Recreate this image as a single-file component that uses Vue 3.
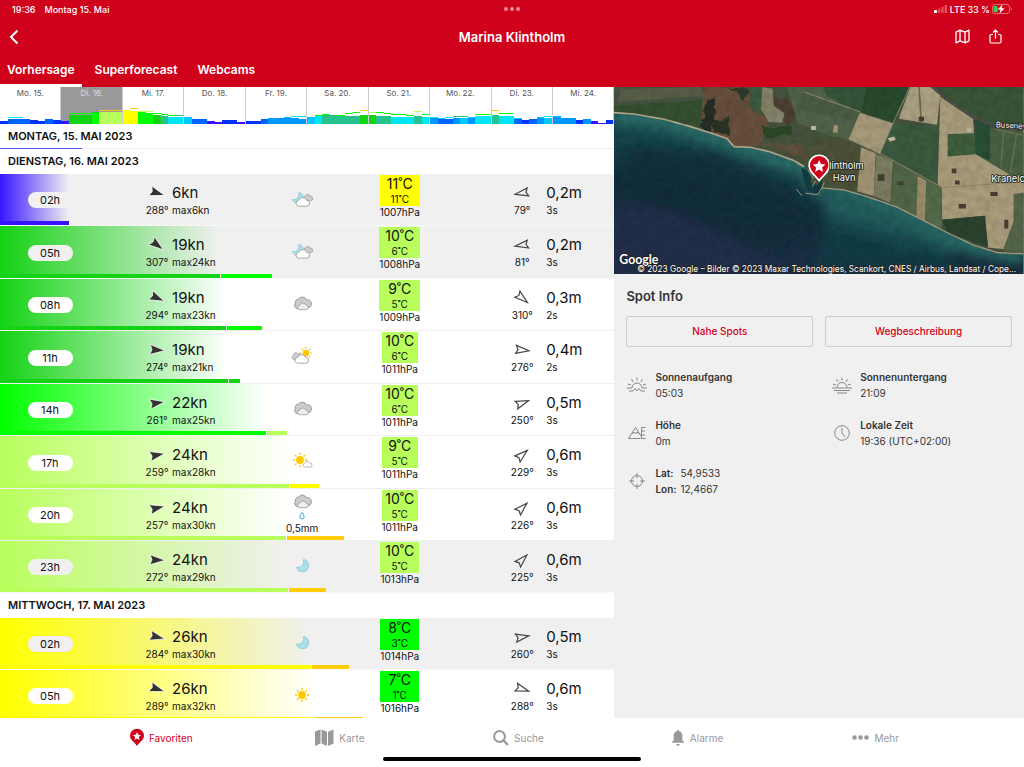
<script setup>
const PALETTE = {
  v: '#3714ff', b: '#0032ff', a: '#0064ff', s: '#0096ff', l: '#00c8ff', c: '#00e6f5',
  t: '#28c38c', g: '#14d214', e: '#00ff00', m: '#b8ff5c', y: '#ffff00', o: '#ffcc0a',
}

const week = [
  { label: 'Mo. 15.', bars: '3b 5a7c 5a7c 5a 4b 3b 5a 4b' },
  { label: 'Di. 16.', bars: '3v 9g11e 9g11e 9g11e 11e12g 12m14o 12m14o 12m14o', active: true },
  { label: 'Mi. 17.', bars: '13y14y 13y16o 12e13m 11e13m 9g11e 8t10e 7c9e 7c9t' },
  { label: 'Do. 18.', bars: '7l 5a 5a 3v 2v 4b 4b 2v' },
  { label: 'Fr. 19.', bars: '3b 3b 5a 6s 6s 6s7l 6s8c 5s8c' },
  { label: 'Sa. 20.', bars: '7l 8c9e 9t10e 9t 8t9e 8t11e 8t12e 9g14o' },
  { label: 'So. 21.', bars: '9g12m 8t12e 8t11e 7c10e 7c10e 7c9e 8t13m 7c10e' },
  { label: 'Mo. 22.', bars: '6s7c 5a6l 5a7c 6s8t 6l8t 6s7l 8c10e 8c10e' },
  { label: 'Di. 23.', bars: '9t14o 8c11e 8c11e 5a6l 4b 5a 6s7l 6l8c' },
  { label: 'Mi. 24.', bars: '7s8l 6s 6s 4b 5s 3v 1v 4b' },
].map((day) => ({
  ...day,
  bars: day.bars.split(' ').map((token) => {
    const [, height, color, gust, gustColor] = token.match(/^(\d+)([a-z])(?:(\d+)([a-z]))?$/)
    return { height: +height, color: PALETTE[color], gust: gust ? +gust : 0, gustColor: PALETTE[gustColor] }
  }),
}))

const slot = (time, night, dir, kn, max, base, gust, baseW, gustW, sky, temp, felt, tempColor, hpa, waveDir, wave, period, rain) => ({
  time, night, dir, kn, max, base: PALETTE[base], gust: PALETTE[gust],
  baseW: `${(baseW / 614) * 100}%`, gustW: `${(gustW / 614) * 100}%`,
  sky, temp, felt, tempColor: PALETTE[tempColor], hpa, waveDir, wave, period, rain,
})

const days = [
  { title: 'Montag, 15. Mai 2023', slots: [] },
  {
    title: 'Dienstag, 16. Mai 2023',
    slots: [
      slot('02h', true, 288, 6, 6, 'v', 'v', 69, 0, 'moon-clouds', 11, 11, 'y', 1007, 79, '0,2', 3),
      slot('05h', true, 307, 19, 24, 'g', 'e', 220, 51, 'moon-clouds', 10, 6, 'm', 1008, 81, '0,2', 3),
      slot('08h', false, 294, 19, 23, 'g', 'e', 226, 35, 'clouds', 9, 5, 'm', 1009, 310, '0,3', 2),
      slot('11h', false, 274, 19, 21, 'g', 'g', 228, 11, 'clouds-sun', 10, 6, 'm', 1011, 276, '0,4', 2),
      slot('14h', false, 261, 22, 25, 'e', 'm', 266, 20, 'clouds', 10, 6, 'm', 1011, 250, '0,5', 3),
      slot('17h', false, 259, 24, 28, 'm', 'y', 289, 29, 'sun-cloud', 9, 5, 'm', 1011, 229, '0,6', 3),
      slot('20h', false, 257, 24, 30, 'm', 'o', 286, 57, 'clouds', 10, 5, 'm', 1011, 226, '0,6', 3, '0,5mm'),
      slot('23h', true, 272, 24, 29, 'm', 'o', 288, 37, 'moon', 10, 5, 'm', 1013, 225, '0,6', 3),
    ],
  },
  {
    title: 'Mittwoch, 17. Mai 2023',
    slots: [
      slot('02h', true, 284, 26, 30, 'y', 'o', 311, 37, 'moon', 8, 3, 'e', 1014, 260, '0,5', 3),
      slot('05h', false, 289, 26, 32, 'y', 'o', 314, 48, 'sun', 7, 1, 'e', 1016, 288, '0,6', 3),
    ],
  },
]

const rayAngles = [0, 45, 90, 135, 180, 225, 270, 315]
const horizonRays = [-72, -36, 0, 36, 72]
const tabs = ['Vorhersage', 'Superforecast', 'Webcams']
const nav = ['Favoriten', 'Karte', 'Suche', 'Alarme', 'Mehr']
</script>

<template>
  <div class="app">
    <svg class="sprite" aria-hidden="true">
      <defs>
        <g id="w-cloud">
          <path d="M3.200 9.200a3 3 0 0 1-.3-6A4 4 0 0 1 10.400 3.200a3 3 0 0 1 .4 6z" />
        </g>
        <g id="w-moon">
          <path d="M7.500 0.500A6.200 6.200 0 1 1 0.500 8.300Q4.500 9 6.500 6.300Q8.200 3.800 7.500 0.500z" fill="#a9dfe8" stroke="#86c3cf" stroke-width=".7" />
        </g>
        <g id="w-sun">
          <circle r="3.900" fill="#ffc800" />
          <path v-for="r in rayAngles" :key="r" d="M0-5V-7" :transform="`rotate(${r})`" stroke="#ffc800" stroke-width="1.400" />
        </g>
      </defs>
    </svg>

    <header class="top">
      <div class="status">
        <div class="status-left"><span>19:36</span><span>Montag 15. Mai</span></div>
        <svg class="grip" width="16" height="4" viewBox="0 0 16 4"><circle cx="2" cy="2" r="2" /><circle cx="8" cy="2" r="2" /><circle cx="14" cy="2" r="2" /></svg>
        <div class="status-right">
          <svg width="14" height="8" viewBox="0 0 14 8" fill="#fff">
            <rect y="5" width="3" height="3" rx=".7" /><rect x="3.800" y="3.500" width="2.500" height="4.500" rx=".7" opacity=".3" /><rect x="7.200" y="1.800" width="2.500" height="6.200" rx=".7" opacity=".3" /><rect x="10.600" y="0" width="2.500" height="8" rx=".7" opacity=".3" />
          </svg>
          <span>LTE</span><span>33 %</span>
          <svg width="20" height="10" viewBox="0 0 20 10">
            <rect x=".5" y=".5" width="17" height="9" rx="2.500" fill="none" stroke="#fff" opacity=".4" />
            <path d="M2.500 2h3v6h-3a.8.8 0 0 1-.8-.8V2.800A.8.8 0 0 1 2.500 2z" fill="#34d74b" />
            <path d="M18.700 3.500a1.600 1.600 0 0 1 0 3z" fill="#fff" opacity=".5" />
            <path d="M10.500 0.500L5.500 5.600h3L7.600 9.500l5-5.200H9.500z" fill="#fff" />
          </svg>
        </div>
      </div>
      <div class="titlebar">
        <button class="icon-button" aria-label="Zurück"><svg width="10" height="16" viewBox="0 0 10 16"><path d="M8.500 1.500L2 8l6.500 6.500" stroke-width="2" /></svg></button>
        <h1>Marina Klintholm</h1>
        <div class="actions">
          <button class="icon-button" aria-label="Karte"><svg width="15" height="15" viewBox="0 0 15 15"><path d="M1 3.200L5 1.200L10 3.200L14 1.200V11.800L10 13.800L5 11.800L1 13.800zM5 1.200V11.800M10 3.200V13.800" stroke-width="1.300" stroke-linejoin="round" /></svg></button>
          <button class="icon-button" aria-label="Teilen"><svg width="13" height="15" viewBox="0 0 13 15"><path d="M4 5.500H2.200A1.200 1.200 0 0 0 1 6.700V12.800A1.200 1.200 0 0 0 2.200 14H10.800A1.200 1.200 0 0 0 12 12.800V6.700A1.200 1.200 0 0 0 10.800 5.500H9M6.500 9.500V1.200M4 3.500L6.500 1L9 3.500" stroke-width="1.200" /></svg></button>
        </div>
      </div>
      <nav class="tabs">
        <a v-for="(tab, i) in tabs" :key="tab" href="#" :class="{ current: i === 0 }">{{ tab }}</a>
      </nav>
    </header>

    <main>
      <section class="forecast">
        <div class="week">
          <button v-for="day in week" :key="day.label" class="week-day" :class="{ active: day.active }">
            <span>{{ day.label }}</span>
            <span class="bars">
              <i v-for="(bar, i) in day.bars" :key="i" class="bar">
                <i v-if="bar.gust" class="gust" :style="{ height: bar.gust - bar.height + 'px', borderColor: bar.gustColor }"></i>
                <i class="wind-bar" :style="{ height: bar.height + 'px', background: bar.color }"></i>
              </i>
            </span>
          </button>
        </div>
        <table>
          <tbody v-for="(day, d) in days" :key="day.title">
            <tr class="day" :class="{ passed: d === 0 }"><th colspan="5" scope="rowgroup">{{ day.title }}</th></tr>
            <tr v-for="s in day.slots" :key="s.time" class="slot" :class="{ night: s.night }">
              <th class="time" scope="row">
                <span class="fade" :style="{ width: s.baseW, '--tone': s.base }"></span>
                <span class="meter"><i :style="{ width: s.baseW, background: s.base }"></i><i :style="{ width: s.gustW, background: s.gust }"></i></span>
                <span class="pill">{{ s.time }}</span>
              </th>
              <td class="wind">
                <svg class="arrow" width="18" height="18" viewBox="-9 -9 18 18"><path :transform="`rotate(${s.dir - 270})`" d="M-7-5L8 0L-7 5L-5 0z" fill="#333" stroke="#fff" stroke-width=".7" /></svg>
                <span class="big">{{ s.kn }}kn</span>
                <span class="deg">{{ s.dir }}°</span>
                <span>max{{ s.max }}kn</span>
              </td>
              <td class="sky">
                <svg width="24" height="18" viewBox="0 0 24 18">
                  <template v-if="s.sky === 'moon-clouds'">
                    <g transform="translate(2 2) scale(.9)"><use href="#w-moon" /></g>
                    <g transform="translate(13 4) scale(.72)" fill="#ccc" stroke="#999"><use href="#w-cloud" /></g>
                    <g transform="translate(6 7)" fill="#fff" stroke="#aaa"><use href="#w-cloud" /></g>
                  </template>
                  <template v-else-if="s.sky === 'clouds'">
                    <path d="M7 13.500a3.200 3.200 0 0 1-1.500-5.200A3.300 3.300 0 0 1 8.500 4A4.600 4.600 0 0 1 16.500 5A3.700 3.700 0 0 1 18.500 12.500z" fill="#ccc" stroke="#999" />
                    <g transform="translate(7.500 7.500) scale(.8 .78)" fill="#eee" stroke="#999"><use href="#w-cloud" /></g>
                  </template>
                  <template v-else-if="s.sky === 'clouds-sun'">
                    <g transform="translate(16 6) scale(.85)"><use href="#w-sun" /></g>
                    <g transform="translate(2 5) rotate(-28 5 5) scale(.7)" fill="#ccc" stroke="#aaa"><use href="#w-cloud" /></g>
                    <g transform="translate(5 7)" fill="#fff" stroke="#aaa"><use href="#w-cloud" /></g>
                  </template>
                  <template v-else-if="s.sky === 'sun-cloud'">
                    <g transform="translate(10 8)"><use href="#w-sun" /></g>
                    <g transform="translate(13 9) scale(.66)" fill="#fff" stroke="#999"><use href="#w-cloud" /></g>
                  </template>
                  <g v-else-if="s.sky === 'moon'" transform="translate(6 2)"><use href="#w-moon" /></g>
                  <g v-else transform="translate(12 9)"><use href="#w-sun" /></g>
                </svg>
                <template v-if="s.rain">
                  <svg width="8" height="10" viewBox="0 0 8 10"><path d="M4 1.500C2.500 3.800 1.800 4.500 1.800 5.700a2.200 2.200 0 0 0 4.400 0C6.200 4.500 5.500 3.800 4 1.500z" fill="#fff" stroke="#38a8ee" /></svg>
                  <span>{{ s.rain }}</span>
                </template>
              </td>
              <td class="air">
                <div class="temp" :style="{ background: s.tempColor }"><span class="degrees">{{ s.temp }}˚C</span><span>{{ s.felt }}˚C</span></div>
                <span>{{ s.hpa }}hPa</span>
              </td>
              <td class="wave">
                <svg class="arrow" width="18" height="18" viewBox="-9 -9 18 18"><path :transform="`rotate(${s.waveDir - 270})`" d="M-6-4L7 0L-6 4L-4 0z" fill="none" stroke="#444" stroke-width="1.200" /></svg>
                <span class="big">{{ s.wave }}m</span>
                <span class="deg">{{ s.waveDir }}°</span>
                <span>{{ s.period }}s</span>
              </td>
            </tr>
          </tbody>
        </table>
      </section>

      <aside>
        <svg class="map" viewBox="0 3 1230 561" preserveAspectRatio="xMidYMid slice" role="img" aria-label="Satellitenkarte Klintholm Havn">
          <defs>
            <linearGradient id="sea" x1=".62" y1=".1" x2=".3" y2="1">
              <stop offset="0" stop-color="#2a6664" /><stop offset=".32" stop-color="#174a52" /><stop offset=".6" stop-color="#12303c" /><stop offset="1" stop-color="#1f2e48" />
            </linearGradient>
            <filter id="soft"><feGaussianBlur stdDeviation="16" /></filter>
            <filter id="rough"><feTurbulence type="fractalNoise" baseFrequency=".03" numOctaves="4" seed="4" result="n" /><feDisplacementMap in="SourceGraphic" in2="n" scale="24" xChannelSelector="R" yChannelSelector="G" /></filter>
            <filter id="grain" x="0" y="0" width="100%" height="100%"><feTurbulence type="fractalNoise" baseFrequency=".045" numOctaves="5" seed="9" /><feColorMatrix values="0 0 0 0 0  0 0 0 0 0  0 0 0 0 0  .9 .5 0 0 -.5" /></filter>
            <clipPath id="waterClip"><path d="M0 80L60 84L150 100L230 122L300 144L340 158L360 182L410 184L470 198L540 224L575 242L570 300L600 326L622 306L690 312L760 332L850 364L930 404L1000 440L1080 478L1150 500L1230 504V567H0z" /></clipPath>
          </defs>
          <rect y="3" width="1230" height="561" fill="#46533c" />
          <path d="M0 3H410L380 150L270 145L240 70L0 80z" fill="#465442" />
          <path d="M20 10L260 3L272 30L10 48z" fill="#6a6650" opacity=".55" />
          <path d="M0 60L265 43L262 125L150 100L0 78z" fill="#35502f" />
          <path d="M270 3H400L415 75L465 100L440 180L360 185L340 155L290 145L262 110z" fill="#67503c" />
          <g filter="url(#rough)">
            <path d="M280 38L305 34L300 110L280 150L262 120z" fill="#272e25" />
            <path d="M330 3L400 8L395 55L370 20z" fill="#2d3929" />
            <path d="M300 105L345 95L355 150L300 140z" fill="#2a3526" />
            <path d="M470 30L535 45L550 95L520 115L495 70z" fill="#4e4035" />
            <path d="M440 125L530 115L540 150L460 158z" fill="#2b4927" />
            <path d="M415 170L560 175L590 222L500 196z" fill="#5d513d" />
          </g>
          <path d="M418 3H446L440 75L405 60z" fill="#3a5b3e" />
          <path d="M446 3L476 8L480 60L512 82L505 110L465 108L441 70z" fill="#85836a" />
          <path d="M520 3H625L640 28L740 75L705 162L650 150L550 110z" fill="#52634b" />
          <path d="M568 18L740 78L728 104L550 70z" fill="#4b5c44" />
          <path d="M632 3H755L738 80L640 30z" fill="#34553a" />
          <path d="M758 3H888L835 110L742 78z" fill="#294a2e" />
          <path d="M738 80L838 112L798 204L705 160z" fill="#a99c7c" />
          <path d="M600 158L704 162L745 188L730 312L630 290L575 230z" fill="#4c5138" />
          <path d="M742 184L786 202L780 330L730 316z" fill="#a49475" />
          <path d="M788 204L838 225L830 352L780 330z" fill="#7d7d61" />
          <path d="M838 112L972 118L972 296L800 204z" fill="#3b5a3e" />
          <path d="M842 226L912 262L908 402L830 354z" fill="#526647" />
          <path d="M912 270L938 284L934 404L908 396z" fill="#9c8f6e" />
          <path d="M938 282L985 306L984 435L934 408z" fill="#546b4a" />
          <path d="M890 3H950L980 28L970 116L855 98z" fill="#aca082" />
          <path d="M916 3L923 112" stroke="#6b684f" stroke-width="5" />
          <path d="M980 32L1078 98L1085 204L1230 290V320L1210 390L1170 490L1122 485L1115 390L985 402L985 305L972 296z" fill="#aa9d7c" />
          <path d="M956 3H1230V130L1140 116L1030 60z" fill="#3a5538" />
          <path d="M1002 144L1082 142L1086 205L1002 212z" fill="#3f5f3d" />
          <path d="M1082 96L1230 140V292L1088 204z" fill="#486140" />
          <path d="M1082 96L1130 110L1128 224L1086 204z" fill="#2a4f36" />
          <path d="M1145 130L1230 148M1170 135L1162 245M1210 140L1190 260" stroke="#6c7454" stroke-width="4" />
          <path d="M985 402L1112 390L1124 484L1000 440z" fill="#2b432e" />
          <path d="M1200 325L1230 320V504L1168 494L1200 405z" fill="#55664a" />
          <path d="M956 3L1005 45L1080 95L1145 122L1230 130" fill="none" stroke="#4c4f4b" stroke-width="8" />
          <path d="M888 3L838 112L798 205M705 160L800 204L842 226L985 305L1200 290M740 78L570 18" fill="none" stroke="#928b70" stroke-width="3" />
          <path d="M792 265h20v20h-20zM915 92h16v14h-16zM1014 248h14v14h-14zM1024 284h14v12h-14zM1035 354h22v14h-22zM1130 318h22v12h-22zM1172 402h12v26h-12zM850 287h20v10h-20z" fill="#483f34" />
          <path d="M822 157l20-5 4 10-18 5zM1058 128h14v10h-14zM592 120h14v12h-14z" fill="#c1bba8" />
          <path d="M660 118h12v22h-14z" fill="#a99a77" />
          <g clip-path="url(#waterClip)">
            <rect width="1230" height="567" fill="url(#sea)" />
            <g filter="url(#soft)">
              <path d="M0 80L150 100L340 158L400 184L575 242L620 306L850 364L1080 478L1230 504" fill="none" stroke="#2c6c67" stroke-width="60" />
              <path d="M620 300L850 380L1000 460L1080 500L880 500L640 430z" fill="#215c5d" />
              <path d="M60 180L300 200L520 310L590 420L480 500L280 430L0 330z" fill="#102d38" opacity=".75" />
              <path d="M640 390L950 470L1060 567H600z" fill="#103e49" opacity=".8" />
              <path d="M0 350L160 370L330 450L540 567H0z" fill="#202f4b" />
            </g>
          </g>
          <path d="M0 80L60 84L150 100L230 122L300 144L340 158L360 182L410 184L470 198L540 224L570 242" fill="none" stroke="#b8aa8e" stroke-width="5" />
          <path d="M622 306L690 312L760 332L850 364L930 404L1000 440L1080 478L1150 500L1230 504" fill="none" stroke="#a89d83" stroke-width="4" />
          <path d="M562 245L595 262L590 290L610 298L626 280L622 318L600 326L575 305z" fill="#123d44" />
          <path d="M582 252L598 278M605 285L595 302M548 310L565 330M575 322L612 326L624 306L632 288" fill="none" stroke="#a49a7e" stroke-width="3" />
          <rect y="3" width="1230" height="561" filter="url(#grain)" opacity=".2" />
          <path d="M616 284C600 264 586 258 586 238a30 30 0 0 1 60 0C646 258 632 264 616 284z" fill="#d0021b" stroke="#fff" stroke-width="5" />
          <path d="M616 222l5.500 12.500 13.500 1.300-10 9 3 13.200-12-7-12 7 3-13.200-10-9 13.500-1.300z" fill="#fff" />
          <g class="map-label">
            <text x="646" y="249">lintholm</text><text x="657" y="286">Havn</text><text x="1133" y="287">Kranelc</text>
            <text x="1146" y="124" class="road" transform="rotate(3 1146 124)">Busenev</text>
          </g>
          <text x="16" y="535" class="brand">Google</text>
          <text x="70" y="558" class="credit">© 2023 Google – Bilder © 2023 Maxar Technologies, Scankort, CNES / Airbus, Landsat / Cope...</text>
        </svg>

        <div class="info">
          <h2>Spot Info</h2>
          <div class="buttons"><button>Nahe Spots</button><button>Wegbeschreibung</button></div>
          <dl>
            <div class="fact">
              <svg width="22" height="22" viewBox="-11 -11 22 22"><path d="M-10 3H-5A5 5 0 0 1 5 3H10M-8 6H-4L-2 3.500L0 6L2 3.500L4 6H8" /><path v-for="r in horizonRays" :key="r" d="M0-6.500V-9.500" :transform="`translate(0 2) rotate(${r})`" /></svg>
              <div><dt>Sonnenaufgang</dt><dd>05:03</dd></div>
            </div>
            <div class="fact">
              <svg width="22" height="22" viewBox="-11 -11 22 22"><path d="M-5 2.500A5 5 0 0 1 5 2.500M-10 3H10M-8 5.500H8M-5 8H5" /><path v-for="r in horizonRays" :key="r" d="M0-6.500V-9.500" :transform="`translate(0 2) rotate(${r})`" /></svg>
              <div><dt>Sonnenuntergang</dt><dd>21:09</dd></div>
            </div>
            <div class="fact">
              <svg width="22" height="22" viewBox="-11 -11 22 22"><path d="M-8.500 5.500L-1.500-5.500L4 3M-8.500 5.500H3.500M-5 1L-3-1L-1.500 1L0-1L2 1M8.500-5.500H4.500V5.500H8.500M4.500-2H8M4.500 2H8" /></svg>
              <div><dt>Höhe</dt><dd>0m</dd></div>
            </div>
            <div class="fact">
              <svg width="22" height="22" viewBox="-11 -11 22 22"><circle r="7.300" /><path d="M0-5V0L3 4" /></svg>
              <div><dt>Lokale Zeit</dt><dd>19:36 (UTC+02:00)</dd></div>
            </div>
            <div class="fact">
              <svg width="22" height="22" viewBox="-11 -11 22 22"><circle r="5.500" /><path d="M0-8V-3M0 3V8M-8 0H-3M3 0H8" /></svg>
              <div class="coords"><dt>Lat:</dt><dd>54,9533</dd><dt>Lon:</dt><dd>12,4667</dd></div>
            </div>
          </dl>
        </div>
      </aside>
    </main>

    <footer>
      <nav class="bottom-nav">
        <a v-for="(item, i) in nav" :key="item" href="#" :class="{ current: i === 0 }">
          <svg v-if="i === 0" width="14" height="17" viewBox="0 0 14 17"><path d="M7 17C5 13.500 0 11 0 6.800a7 7 0 0 1 14 0C14 11 9 13.500 7 17z" /><path d="M7 3l1.200 2.700 2.800.3-2.100 2 .6 2.900L7 9.500l-2.500 1.400.6-2.900L3 6l2.800-.3z" fill="#fff" /></svg>
          <svg v-else-if="i === 1" width="19" height="17" viewBox="0 0 19 17"><path d="M0 2.500L5.500 .5V14.500L0 17zM6.500 .5L12 2.800V17L6.500 14.600zM13 2.800L18.500 .5V14.500L13 17z" /></svg>
          <svg v-else-if="i === 2" width="16" height="16" viewBox="0 0 16 16"><circle cx="6.500" cy="6.500" r="5.400" fill="none" stroke="currentColor" stroke-width="2" /><path d="M10.500 10.500L15 15" stroke="currentColor" stroke-width="2.300" /></svg>
          <svg v-else-if="i === 3" width="14" height="16" viewBox="0 0 14 16"><path d="M7 0a1 1 0 0 1 1 1.300A4.400 4.400 0 0 1 11.300 6V10L13 12v.8H1V12L2.700 10V6A4.400 4.400 0 0 1 6 1.300A1 1 0 0 1 7 0zM5.200 14H8.800A1.800 1.800 0 0 1 5.200 14z" /></svg>
          <svg v-else width="17" height="6" viewBox="0 0 17 6"><circle cx="2.500" cy="2.500" r="2.300" /><circle cx="8.500" cy="2.500" r="2.300" /><circle cx="14.500" cy="2.500" r="2.300" /></svg>
          {{ item }}
        </a>
      </nav>
      <div class="home-bar"></div>
    </footer>
  </div>
</template>

<style>
body { background: #fff; }
</style>

<style scoped>
.app {
  height: 100vh;
  display: flex;
  flex-direction: column;
  overflow: hidden;
  font-family: Inter, "Liberation Sans", sans-serif;
  font-size: 10px;
  color: #111;
}
.app button { font-family: inherit; cursor: pointer; }
.app a { text-decoration: none; }
h1, h2, dl, dd { margin: 0; }
.sprite { position: absolute; width: 0; height: 0; }

.top { background: #d0021b; color: #fff; flex: none; }
.status { display: grid; grid-template-columns: 1fr auto 1fr; align-items: center; height: 18px; padding: 0 12px; font-size: 9px; font-weight: 500; }
.status-left { display: flex; gap: 9px; }
.status-right { display: flex; gap: 2px; align-items: center; justify-content: flex-end; }
.grip { fill: #f08a96; }
.titlebar { display: grid; grid-template-columns: 1fr auto 1fr; align-items: center; height: 37px; padding: 0 22px 0 9px; }
.titlebar h1 { font-size: 13px; line-height: 18px; font-weight: 600; padding-left: 13px; }
.icon-button { display: flex; justify-self: start; padding: 0; border: 0; background: none; }
.icon-button svg { fill: none; stroke: #fff; }
.actions { display: flex; justify-content: flex-end; align-items: center; gap: 19px; }
.tabs { display: flex; gap: 6px; }
.tabs a { padding: 0 7px; color: #fff; font-size: 12px; font-weight: 600; line-height: 29px; border-bottom: 3px solid transparent; }
.tabs a.current { border-color: #fff; }

main { flex: 1; min-height: 0; display: grid; grid-template-columns: 3fr 2fr; overflow: hidden; }
.forecast { min-width: 0; overflow: hidden; }
.week { display: flex; height: 37px; }
.week-day { flex: 1; min-width: 0; display: flex; flex-direction: column; justify-content: space-between; padding: 0; border: 0; border-right: 1px solid #ccc; background: #fff; color: #555; font-size: 8px; line-height: 13px; text-align: center; }
.week-day.active { background: #999; color: #ddd; }
.bars { display: flex; align-items: flex-end; }
.bar { flex: 1; display: block; }
.gust, .wind-bar { display: block; box-sizing: border-box; }
.gust { border-top: 1px solid; }

table { display: block; width: 100%; }
tbody, tr, th, td { display: block; }
th, td { padding: 0; text-align: left; font-weight: 400; }
.day { box-sizing: border-box; height: 25px; padding-left: 8px; background: #fff; }
.day th { font-size: 11px; font-weight: 600; line-height: 25px; text-transform: uppercase; }
.day.passed { border-bottom: 1px solid; border-image: linear-gradient(90deg, #4a5cff 83px, #eee 83px) 1; }
.slot { position: relative; box-sizing: border-box; height: 52px; display: grid; grid-template-columns: 100fr 144fr 118fr 75fr 177fr; border-bottom: 1px solid #f0f0f0; line-height: 16px; --ground: #fff; background: var(--ground); }
.slot:nth-child(odd):not(:last-child) { height: 53px; }
.slot.night { --ground: #f0f0f0; border-color: #f8f8f8; }
.time { display: flex; align-items: center; justify-content: center; padding-top: 1px; font-size: 11px; }
.fade { position: absolute; inset: 0 auto 0 0; background: linear-gradient(90deg, var(--tone), var(--ground)); }
.meter { position: absolute; inset: auto 0 0 0; height: 4px; display: flex; gap: 1px; }
.meter i { display: block; }
.pill { position: relative; width: 45px; border-radius: 8px; background: var(--ground); text-align: center; }
.wind, .wave { position: relative; display: grid; grid-template-rows: 18px 16px; align-content: center; align-items: center; padding-top: 2px; }
.wind { grid-template-columns: 22px 1fr; column-gap: 4px; padding-left: 46px; }
.wave { grid-template-columns: 24px 1fr; column-gap: 12px; padding-left: 73px; }
.arrow { justify-self: center; }
.deg { justify-self: center; }
.big { font-size: 15px; line-height: 18px; }
.sky { position: relative; display: flex; flex-direction: column; align-items: center; justify-content: center; padding: 0 2px 2px 0; line-height: 14px; }
.sky svg { flex: none; }
.air { display: grid; justify-content: center; align-content: start; padding-top: 1px; line-height: 13px; }
.temp { display: grid; text-align: center; }
.degrees { font-size: 14px; line-height: 18px; }

aside { min-width: 0; overflow: hidden; background: #f0f0f0; color: #333; }
.map { display: block; width: 100%; aspect-ratio: 1230 / 561; }
.map text { fill: #fff; stroke: #222; stroke-width: 5px; paint-order: stroke; stroke-linejoin: round; }
.map-label { font-size: 28px; }
.map .road { font-size: 23px; }
.map .brand { font-family: Lato, sans-serif; font-size: 37px; font-weight: 700; }
.map .credit { font-size: 25px; }
.info { padding: 12px; }
.info h2 { font-size: 13px; line-height: 20px; font-weight: 600; }
.buttons { display: grid; grid-template-columns: 1fr 1fr; gap: 12px; margin-top: 10px; }
.buttons button { height: 31px; border: 1px solid #ccc; border-radius: 2px; background: transparent; color: #d0021b; font-size: 10px; font-weight: 500; }
dl { display: grid; grid-template-columns: 1fr 1fr; row-gap: 16px; margin: 22px -24px 0 0; font-size: 10px; line-height: 16px; }
.fact { display: flex; align-items: center; gap: 7px; }
.fact svg { flex: none; fill: none; stroke: #888; }
dt { font-weight: 600; }
.coords { display: grid; grid-template-columns: auto auto; column-gap: 4px; }

footer { flex: none; height: 49px; background: #fff; }
.bottom-nav { display: flex; height: 39px; padding: 0 59px 0 72px; }
.bottom-nav a { flex: 1; display: flex; align-items: center; justify-content: center; gap: 5px; color: #999; font-size: 10px; font-weight: 400; }
.bottom-nav a.current { color: #d0021b; }
.bottom-nav svg { fill: currentColor; }
.home-bar { width: 258px; height: 4px; margin: 0 auto; border-radius: 2px; background: #000; }
</style>
